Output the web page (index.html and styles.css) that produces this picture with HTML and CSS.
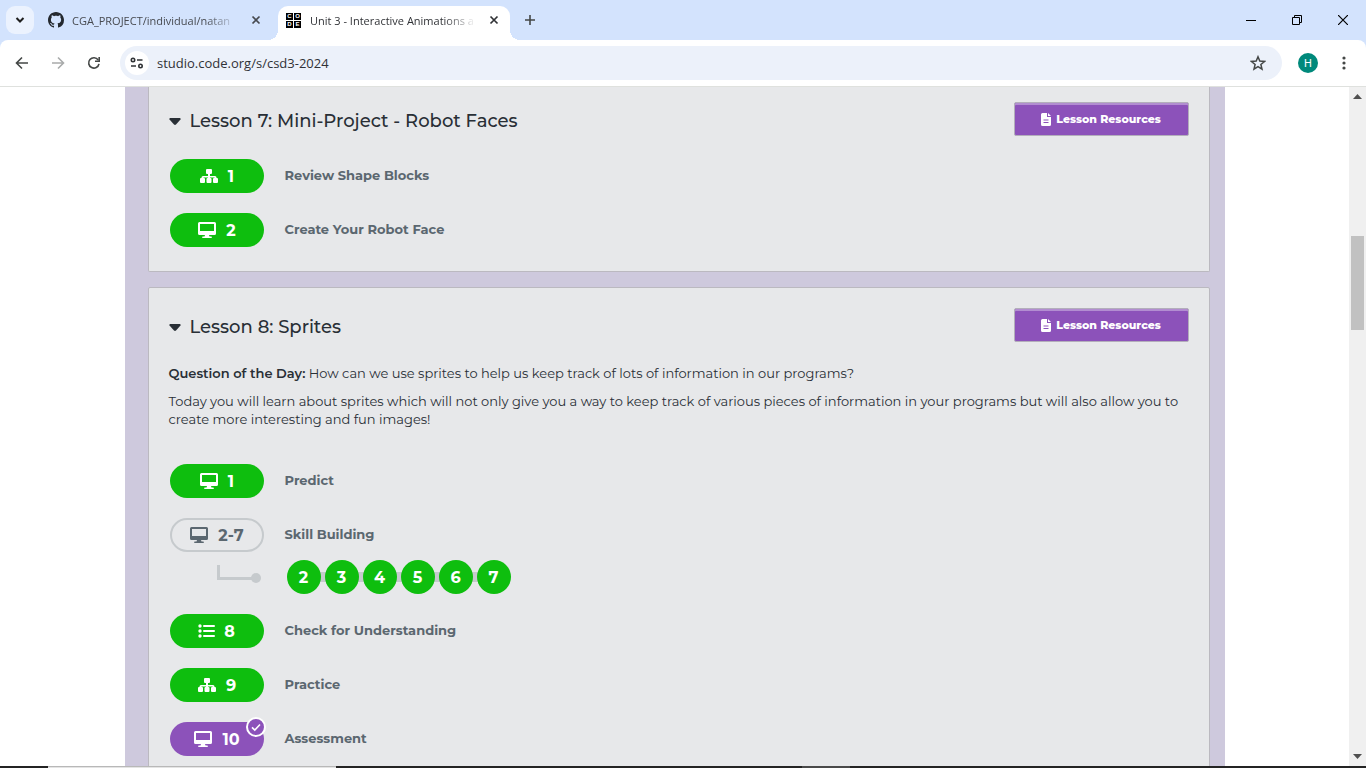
FILE: index.html
```html
<!DOCTYPE html>
<html lang="en">
<head>
<meta charset="utf-8">
<title>Unit 3 - Interactive Animations and Games</title>
<link rel="stylesheet" href="styles.css">
</head>
<body>
<svg class="sprite" aria-hidden="true">
  <symbol id="sitemap" viewBox="0 0 20 16"><path fill="currentColor" d="M8 1h4q1 0 1 1v3q0 1-1 1h-1v2h5q1.500 0 1.500 1.500V10h.500q1 0 1 1v3q0 1-1 1h-3q-1 0-1-1v-3q0-1 1-1h.500v-.500H11v.500h.500q1 0 1 1v3q0 1-1 1h-3q-1 0-1-1v-3q0-1 1-1H9v-.500H4.500v.500H5q1 0 1 1v3q0 1-1 1H2q-1 0-1-1v-3q0-1 1-1h.500v-.500Q2.500 8 4 8h5V6H8Q7 6 7 5V2q0-1 1-1z"/></symbol>
  <symbol id="desktop" viewBox="0 0 20 17"><path fill="currentColor" fill-rule="evenodd" d="M2.500 0h15Q19 0 19 1.500v10q0 1.500-1.500 1.500H12l.500 1.500H14q1 0 1 .750T14 16H6q-1 0-1-.750t1-.750h1.500L8 13H2.500Q1 13 1 11.500v-10Q1 0 2.500 0zM3 2v7h14V2z"/></symbol>
  <symbol id="list" viewBox="0 0 17 16"><g fill="currentColor"><circle cx="2" cy="3" r="1.700"/><circle cx="2" cy="8" r="1.700"/><circle cx="2" cy="13" r="1.700"/><rect x="5" y="2" width="12" height="2" rx="1"/><rect x="5" y="7" width="12" height="2" rx="1"/><rect x="5" y="12" width="12" height="2" rx="1"/></g></symbol>
  <symbol id="file" viewBox="0 0 10 13"><path fill="currentColor" fill-rule="evenodd" d="M1.500 0H6v4h4v7.500q0 1.500-1.500 1.500h-7Q0 13 0 11.500v-10Q0 0 1.500 0zM7 0l3 3H7zM2.500 6.500v1h5v-1zm0 2.500v1h5V9z"/></symbol>
  <symbol id="close" viewBox="0 0 10 10"><path d="M1.500 1.500l7 7m0-7l-7 7" stroke="currentColor" stroke-width="1.700"/></symbol>
</svg>

<header class="tabstrip">
  <button class="tab-search" aria-label="Search tabs"><svg width="10" height="8" viewBox="0 0 10 8"><path d="M1.500 2L5 5.500 8.500 2" fill="none" stroke="currentColor" stroke-width="2"/></svg></button>
  <div class="tab">
    <svg width="16" height="16" viewBox="0 0 16 16"><path fill="#24292f" d="M8 0C3.580 0 0 3.580 0 8c0 3.540 2.290 6.530 5.470 7.590.4.070.550-.170.550-.380 0-.190-.010-.820-.010-1.490-2.010.370-2.530-.490-2.690-.940-.090-.230-.480-.940-.820-1.130-.280-.150-.680-.520-.010-.530.630-.010 1.080.580 1.230.820.720 1.210 1.870.870 2.330.660.070-.520.280-.870.510-1.070-1.780-.2-3.640-.890-3.640-3.950 0-.870.310-1.590.820-2.150-.080-.2-.360-1.020.080-2.120 0 0 .670-.210 2.200.820.640-.180 1.320-.270 2-.270s1.360.090 2 .270c1.530-1.040 2.200-.820 2.200-.820.440 1.100.160 1.920.080 2.120.510.560.820 1.270.820 2.150 0 3.070-1.870 3.750-3.650 3.950.290.250.540.730.540 1.480 0 1.070-.010 1.930-.010 2.200 0 .210.150.460.550.380A8.010 8.010 0 0 0 16 8c0-4.420-3.580-8-8-8z"/></svg>
    <span class="tab-title">CGA_PROJECT/individual/natan</span>
    <button class="tab-close" aria-label="Close tab"><svg width="10" height="10"><use href="#close"/></svg></button>
  </div>
  <div class="tab tab-active">
    <span class="code-logo" aria-hidden="true"><i>C</i><i>O</i><i>D</i><i>E</i></span>
    <span class="tab-title">Unit 3 - Interactive Animations a</span>
    <button class="tab-close" aria-label="Close tab"><svg width="10" height="10"><use href="#close"/></svg></button>
  </div>
  <button class="new-tab" aria-label="New tab"><svg width="12" height="12" viewBox="0 0 12 12"><path d="M6 1v10M1 6h10" stroke="currentColor" stroke-width="1.600"/></svg></button>
  <div class="window-controls">
    <button aria-label="Minimize"><svg width="10" height="10"><path d="M0 5.500h10" stroke="#000"/></svg></button>
    <button aria-label="Restore"><svg width="10" height="10" fill="none" stroke="#000"><path d="M.5 2.500h7v7h-7zM2.500 2.500v-2h7v7h-2"/></svg></button>
    <button aria-label="Close"><svg width="10" height="10"><path d="M0 0l10 10M10 0L0 10" stroke="#000" stroke-width="1.200"/></svg></button>
  </div>
</header>

<nav class="toolbar" aria-label="Browser">
  <button class="tool" aria-label="Back"><svg width="14" height="14" viewBox="0 0 14 14"><path d="M13 7H2M7 1.500L1.500 7 7 12.500" fill="none" stroke="#444746" stroke-width="1.600"/></svg></button>
  <button class="tool" aria-label="Forward"><svg width="14" height="14" viewBox="0 0 14 14"><path d="M1 7h11M7 1.500L12.500 7 7 12.500" fill="none" stroke="#a9abab" stroke-width="1.600"/></svg></button>
  <button class="tool" aria-label="Reload"><svg width="14" height="14" viewBox="0 0 14 14"><path d="M12 7.800A5.200 5.200 0 1 1 11.200 4" fill="none" stroke="#444746" stroke-width="1.600"/><path d="M12.200 1v4.300H8" fill="none" stroke="#444746" stroke-width="1.600"/></svg></button>
  <div class="omnibox">
    <button class="site-info" aria-label="Site information"><svg width="14" height="12" viewBox="0 0 14 12" fill="none" stroke="#303336" stroke-width="1.600"><circle cx="3" cy="3" r="1.700"/><path d="M7 3h5.500M1 9h5"/><circle cx="10.500" cy="9" r="1.700"/></svg></button>
    <input class="address" type="text" aria-label="Address" value="studio.code.org/s/csd3-2024">
    <button class="star" aria-label="Bookmark"><svg width="16" height="16" viewBox="0 0 16 16"><path d="M8 1.800l1.800 4.300 4.700.4-3.600 3 1.100 4.600L8 11.700l-4 2.400 1.100-4.600-3.600-3 4.700-.4z" fill="none" stroke="#444746" stroke-width="1.500"/></svg></button>
  </div>
  <button class="avatar" aria-label="Profile">H</button>
  <button class="menu" aria-label="Menu"><svg width="4" height="14" fill="#444746"><circle cx="2" cy="2" r="1.600"/><circle cx="2" cy="7" r="1.600"/><circle cx="2" cy="12" r="1.600"/></svg></button>
</nav>

<div class="viewport">
  <main class="unit">
    <section class="lesson lesson-cut">
      <div class="lesson-head">
        <h2><button class="toggle"><svg width="12" height="7" viewBox="0 0 12 7"><path d="M1 0h10q1 .5.500 1.500L7 6.500q-1 .8-2 0L.5 1.500Q0 .5 1 0z" fill="currentColor"/></svg>Lesson 7: Mini-Project - Robot Faces</button></h2>
        <button class="resources"><svg width="10" height="13"><use href="#file"/></svg>Lesson Resources</button>
      </div>
      <ul class="levels">
        <li><a class="pill" href="#"><svg width="20" height="16"><use href="#sitemap"/></svg>1</a><a class="name" href="#">Review Shape Blocks</a></li>
        <li><a class="pill" href="#"><svg width="20" height="17"><use href="#desktop"/></svg>2</a><a class="name" href="#">Create Your Robot Face</a></li>
      </ul>
    </section>

    <section class="lesson">
      <div class="lesson-head">
        <h2><button class="toggle"><svg width="12" height="7" viewBox="0 0 12 7"><path d="M1 0h10q1 .5.500 1.500L7 6.500q-1 .8-2 0L.5 1.500Q0 .5 1 0z" fill="currentColor"/></svg>Lesson 8: Sprites</button></h2>
        <button class="resources"><svg width="10" height="13"><use href="#file"/></svg>Lesson Resources</button>
      </div>
      <div class="summary">
        <p><strong>Question of the Day:</strong> How can we use sprites to help us keep track of lots of information in our programs?</p>
        <p>Today you will learn about sprites which will not only give you a way to keep track of various pieces of information in your programs but will also allow you to create more interesting and fun images!</p>
      </div>
      <ul class="levels">
        <li><a class="pill" href="#"><svg width="20" height="17"><use href="#desktop"/></svg>1</a><a class="name" href="#">Predict</a></li>
        <li>
          <a class="pill pill-outline" href="#"><svg width="20" height="17"><use href="#desktop"/></svg>2-7</a><a class="name" href="#">Skill Building</a>
          <svg class="elbow" width="48" height="28" viewBox="0 0 48 28"><path d="M2.500 2v13.500H40" fill="none" stroke="#c6cacd" stroke-width="3"/><circle cx="40" cy="15" r="5" fill="#c6cacd"/></svg>
          <div class="bubbles"><a href="#">2</a><a href="#">3</a><a href="#">4</a><a href="#">5</a><a href="#">6</a><a href="#">7</a></div>
        </li>
        <li><a class="pill" href="#"><svg width="17" height="16"><use href="#list"/></svg>8</a><a class="name" href="#">Check for Understanding</a></li>
        <li><a class="pill" href="#"><svg width="20" height="16"><use href="#sitemap"/></svg>9</a><a class="name" href="#">Practice</a></li>
        <li><a class="pill pill-assess" href="#"><svg width="20" height="17"><use href="#desktop"/></svg>10<svg class="badge" width="20" height="20" viewBox="0 0 20 20"><circle cx="10" cy="10" r="9" fill="#8c52ba" stroke="#fff" stroke-width="2"/><path d="M6 10.300l2.800 2.700L14 7.500" fill="none" stroke="#fff" stroke-width="1.600"/></svg></a><a class="name" href="#">Assessment</a></li>
      </ul>
    </section>
  </main>
  <div class="scrollbar" aria-hidden="true">
    <svg width="9" height="5"><path d="M0 5L4.500 0 9 5z" fill="#505050"/></svg>
    <div class="track"><div class="thumb"></div></div>
    <svg width="9" height="5"><path d="M0 0l4.500 5L9 0z" fill="#505050"/></svg>
  </div>
</div>
<footer class="taskbar"><div class="taskbar-window"></div><div class="taskbar-app"></div></footer>
</body>
</html>
```
FILE: styles.css
```css
* { box-sizing: border-box; }
body {
  margin: 0;
  height: 100vh;
  display: flex;
  flex-direction: column;
  overflow: hidden;
  background: #d3e3fd;
  font-family: "Open Sans", "Noto Sans", sans-serif;
  font-size: 11px;
  color: #1f1f1f;
}
button { border: 0; padding: 0; background: none; font: inherit; color: inherit; display: flex; align-items: center; justify-content: center; }
a { color: inherit; text-decoration: none; }
svg { flex: none; display: block; }
.sprite { position: absolute; width: 0; height: 0; }

/* Tab strip */
.tabstrip { flex: none; height: 40px; display: flex; align-items: flex-end; padding-left: 6px; }
.tab-search { width: 28px; height: 28px; margin-bottom: 6px; border-radius: 9px; background: #ebf2fe; }
.tab { width: 232px; height: 34px; padding: 0 6px 6px 8px; margin-left: 6px; display: flex; align-items: center; gap: 8px; color: #474a50; }
.tab-title { flex: 1; min-width: 0; overflow: hidden; white-space: nowrap; mask-image: linear-gradient(to right, #000 calc(100% - 32px), transparent); }
.tab-close { width: 20px; height: 20px; }
.tab-active { position: relative; background: #fff; border-radius: 10px 10px 0 0; color: #303236; }
.tab-active::before, .tab-active::after { content: ""; position: absolute; bottom: 0; width: 10px; height: 10px; }
.tab-active::before { right: 100%; background: radial-gradient(circle at 0 0, transparent 10px, #fff 10px); }
.tab-active::after { left: 100%; background: radial-gradient(circle at 100% 0, transparent 10px, #fff 10px); }
.code-logo { display: grid; grid-template-columns: 7px 7px; grid-auto-rows: 7px; gap: 1px; padding-right: 1px; }
.code-logo i { background: #000; color: #fff; font: bold 6px/7px "Liberation Sans", sans-serif; text-align: center; }
.new-tab { width: 28px; height: 28px; margin: 0 0 6px 6px; color: #444746; }
.window-controls { margin-left: auto; align-self: stretch; display: flex; }
.window-controls button { width: 46px; }

/* Toolbar */
.toolbar { flex: none; height: 47px; display: flex; align-items: center; padding: 0 16px 0 4px; background: #fff; border-bottom: 1px solid #dfe1de; border-radius: 8px 8px 0 0; }
.tool { width: 36px; height: 34px; }
.omnibox { flex: 1; height: 34px; margin-left: 8px; padding: 0 16px 0 5px; display: flex; align-items: center; gap: 8px; border-radius: 17px; background: #ecf1fa; }
.site-info { width: 24px; height: 24px; border-radius: 50%; background: #fff; }
.address { flex: 1; min-width: 0; border: 0; padding: 0; background: none; font: inherit; font-size: 13px; color: #303236; outline: none; }
.avatar { width: 20px; height: 20px; margin: 0 20px 0 16px; border-radius: 50%; background: #00897b; color: #fff; font: 11px Roboto, sans-serif; }
.menu { width: 12px; height: 28px; }

/* Page */
.viewport { flex: 1; min-height: 0; display: flex; background: #fff; font-family: Montserrat, Inter, sans-serif; color: #292f36; }
.unit { width: 1100px; max-width: 100%; margin: 0 auto; padding: 0 15px 0 23px; overflow: hidden; background: #cec9dd; }
.lesson { margin-bottom: 15px; padding: 20px 20px 24px; background: #e7e8ea; border: 1px solid #bbb9c0; border-radius: 2px; }
.lesson-cut { border-top: 0; border-radius: 0 0 2px 2px; padding-top: 15px; }
.lesson-head { display: flex; justify-content: space-between; align-items: center; height: 34px; }
.lesson-head h2 { margin: 0; padding-top: 4px; font-size: 18px; line-height: 24px; font-weight: 500; }
.toggle { gap: 9px; }
.resources { width: 175px; height: 34px; gap: 5px; background: #8c52ba; border: 1px solid #b3aebb; border-radius: 2px; box-shadow: inset 0 2px #b28dd1; color: #fff; font-size: 11px; font-weight: 800; }
.summary { margin: 22px 0 36px; font-size: 13px; line-height: 18px; }
.summary p { margin: 0 0 10px; }
.summary p:last-child { margin: 0; }
.summary strong { font-weight: 600; }

/* Levels */
.levels { list-style: none; margin: 23px 0 0; padding: 0 0 0 1px; display: grid; gap: 20px; }
.levels li { display: grid; grid-template-columns: 94px 1fr; column-gap: 21px; row-gap: 8px; align-items: center; }
.pill { position: relative; height: 34px; border-radius: 17px; display: flex; align-items: center; justify-content: center; gap: 9px; background: #0ebe0e; color: #fff; font-size: 16px; font-weight: 700; }
.pill-outline { background: none; border: 2px solid #c6cacd; color: #5b6770; }
.pill-assess { background: #8c52ba; }
.badge { position: absolute; top: -5px; right: -2px; }
.name { padding-bottom: 2px; font-size: 13px; line-height: 20px; font-weight: 700; color: #5b6770; justify-self: start; }
.elbow { justify-self: end; }
.bubbles { display: flex; gap: 4px; padding-left: 2px; isolation: isolate; }
.bubbles a { position: relative; width: 34px; height: 34px; border-radius: 50%; background: #0ebe0e; color: #fff; font-size: 16px; font-weight: 700; display: grid; place-items: center; }
.bubbles a + a::before { content: ""; position: absolute; left: -6px; top: 12px; width: 8px; height: 10px; background: #c6cacd; z-index: -1; }

/* Scrollbar and taskbar */
.scrollbar { flex: none; width: 17px; padding: 7px 0; display: flex; flex-direction: column; align-items: center; background: #f0f0f0; }
.track { flex: 1; align-self: stretch; padding: 0 2px; display: grid; grid-template-rows: 137fr 94fr 424fr; }
.thumb { grid-row: 2; background: #c1c1c1; }
.taskbar { flex: none; height: 2px; display: flex; background: #242424; padding-left: 48px; }
.taskbar-window { width: 288px; background: #e4e4e4; border-top: 1px solid #b8b8b8; }
.taskbar-app { width: 48px; margin-left: 466px; background: #4a4a4a; }
```
